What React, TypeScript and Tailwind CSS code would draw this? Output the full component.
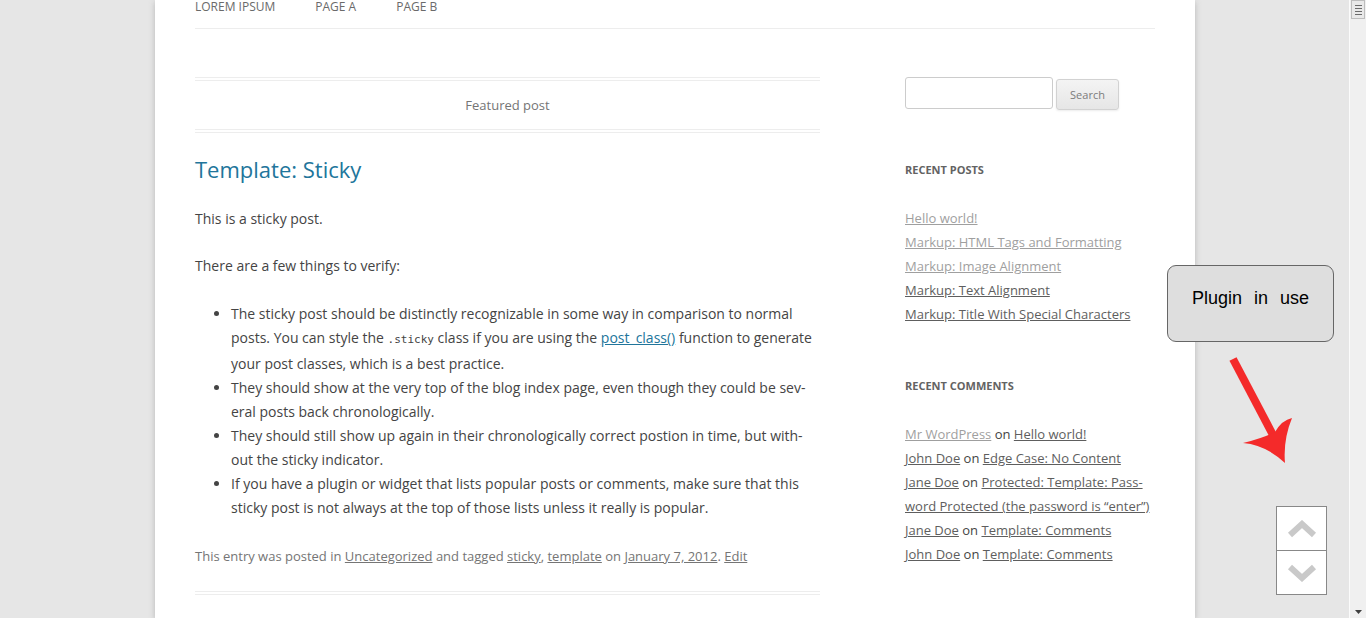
import React from "react";

const font = { fontFamily: '"Open Sans", "Liberation Sans", sans-serif' };

function Light({ children }: { children: React.ReactNode }) {
  return <a className="underline text-[#9f9f9f]">{children}</a>;
}
function Dark({ children }: { children: React.ReactNode }) {
  return <a className="underline text-[#5e5e5e]">{children}</a>;
}

export default function App() {
  return (
    <div
      className="relative w-[1366px] h-[618px] overflow-hidden bg-[#e6e6e6] flex"
      style={font}
    >
      <div className="w-[155px] shrink-0" />
      <div className="w-[1040px] shrink-0 bg-white shadow-[0_2px_6px_rgba(100,100,100,0.35)] px-[40px]">
        {/* nav */}
        <div className="h-[29px] border-b border-[#ededed] flex gap-[40px] text-[12px] leading-[14px] text-[#6a6a6a] uppercase">
          <span>Lorem Ipsum</span>
          <span>Page A</span>
          <span>Page B</span>
        </div>

        <div className="flex pt-[48px]">
          {/* main */}
          <div className="w-[625px] shrink-0 text-[#444]">
            <div className="h-[56px] border-y-4 border-double border-[#ededed] flex items-center justify-center pt-[2px] text-[13px] text-[#757575]">
              Featured post
            </div>
            <h1 className="mt-[23px] text-[22px] leading-[26px] text-[#21759b] font-normal">
              Template: Sticky
            </h1>
            <p className="mt-[25px] text-[14px] leading-[24px]">This is a sticky post.</p>
            <p className="mt-[23px] text-[14px] leading-[24px]">There are a few things to verify:</p>
            <ul className="mt-[24px] list-disc pl-[36px] text-[14px] leading-[24px]">
              <li>
                The sticky post should be distinctly recognizable in some way in comparison to normal
                <br />
                posts. You can style the{" "}
                <code className="text-[11px]" style={{ fontFamily: '"DejaVu Sans Mono", monospace' }}>
                  .sticky
                </code>{" "}
                class if you are using the{" "}
                <a className="underline text-[#21759b]">post_class()</a> function to generate
                <br />
                your post classes, which is a best practice.
              </li>
              <li>
                They should show at the very top of the blog index page, even though they could be sev-
                <br />
                eral posts back chronologically.
              </li>
              <li>
                They should still show up again in their chronologically correct postion in time, but with-
                <br />
                out the sticky indicator.
              </li>
              <li>
                If you have a plugin or widget that lists popular posts or comments, make sure that this
                <br />
                sticky post is not always at the top of those lists unless it really is popular.
              </li>
            </ul>
            <p className="mt-[24px] text-[13px] leading-[24px] text-[#757575]">
              This entry was posted in <a className="underline">Uncategorized</a> and tagged{" "}
              <a className="underline">sticky</a>, <a className="underline">template</a> on{" "}
              <a className="underline">January 7, 2012</a>. <a className="underline">Edit</a>
            </p>
            <div className="mt-[23px] border-b-4 border-double border-[#ededed]" />
          </div>

          {/* sidebar */}
          <div className="ml-auto w-[250px] shrink-0 text-[13px] leading-[24px] text-[#444]">
            <div className="flex items-start">
              <div className="w-[148px] h-[32px] border border-[#cccccc] rounded-[3px] bg-white" />
              <div className="ml-[3px] mt-[2px] w-[63px] h-[31px] border border-[#d2d2d2] rounded-[3px] bg-gradient-to-b from-[#f4f4f4] to-[#e6e6e6] flex items-center justify-center text-[11px] text-[#7c7c7c] shadow-[0_1px_2px_rgba(64,64,64,0.1)]">
                Search
              </div>
            </div>
            <h3 className="mt-[48px] text-[11px] font-bold leading-[24px] text-[#636363] uppercase">
              Recent Posts
            </h3>
            <ul className="mt-[24px]">
              <li><Light>Hello world!</Light></li>
              <li><Light>Markup: HTML Tags and Formatting</Light></li>
              <li><Light>Markup: Image Alignment</Light></li>
              <li><Dark>Markup: Text Alignment</Dark></li>
              <li><Dark>Markup: Title With Special Characters</Dark></li>
            </ul>
            <h3 className="mt-[48px] text-[11px] font-bold leading-[24px] text-[#636363] uppercase">
              Recent Comments
            </h3>
            <ul className="mt-[24px]">
              <li><Light>Mr WordPress</Light> on <Dark>Hello world!</Dark></li>
              <li><Dark>John Doe</Dark> on <Dark>Edge Case: No Content</Dark></li>
              <li>
                <Dark>Jane Doe</Dark> on{" "}
                <Dark>
                  Protected: Template: Pass-
                  <br />
                  word Protected (the password is “enter”)
                </Dark>
              </li>
              <li><Dark>Jane Doe</Dark> on <Dark>Template: Comments</Dark></li>
              <li><Dark>John Doe</Dark> on <Dark>Template: Comments</Dark></li>
            </ul>
          </div>
        </div>
      </div>
      <div className="flex-1" />

      {/* scrollbar */}
      <div className="w-[17px] shrink-0 bg-[#f0f0f0] border-l border-[#fbfbfb] flex flex-col justify-between">
        <div className="h-[19px] mx-[1px] bg-[#e9e9e9] border border-[#bdbdbd] flex flex-col items-center justify-center gap-[2px]">
          <div className="w-[7px] h-[1px] bg-[#6b6b6b]" />
          <div className="w-[7px] h-[1px] bg-[#6b6b6b]" />
          <div className="w-[7px] h-[1px] bg-[#6b6b6b]" />
          <div className="w-[7px] h-[1px] bg-[#6b6b6b]" />
        </div>
        <div className="h-[12px] flex items-center justify-center">
          <svg width="7" height="4" viewBox="0 0 7 4">
            <path d="M0 0 L7 0 L3.5 4 Z" fill="#404040" />
          </svg>
        </div>
      </div>

      {/* plugin label */}
      <div
        className="absolute left-[1167px] top-[265px] w-[167px] h-[77px] border border-[#666] rounded-[9px] bg-[#dedede] pt-[20px] pl-[24px] text-[18px] leading-[24px] text-black [word-spacing:7px]"
        style={{ fontFamily: '"Liberation Sans", Arial, sans-serif' }}
      >
        Plugin in use
      </div>

      {/* red arrow */}
      <svg
        className="absolute left-[1220px] top-[350px]"
        width="90"
        height="120"
        viewBox="1220 350 90 120"
      >
        <line x1="1233" y1="359" x2="1274" y2="437" stroke="#f42a2a" strokeWidth="8" />
        <path
          d="M1285 463 Q1266 445 1243 443 Q1263 438 1275 432 Q1282 420 1292 418 Q1283 440 1285 463 Z"
          fill="#f42a2a"
        />
      </svg>

      {/* scroll buttons */}
      <div className="absolute left-[1276px] top-[506px] w-[51px] h-[89px] border border-[#888] bg-white flex flex-col">
        <div className="h-[44px] border-b border-[#888] flex items-center justify-center">
          <svg width="30" height="18" viewBox="0 0 30 18">
            <path d="M3 15 L15 4 L27 15" fill="none" stroke="#c9c9c9" strokeWidth="6" />
          </svg>
        </div>
        <div className="flex-1 flex items-center justify-center">
          <svg width="30" height="18" viewBox="0 0 30 18">
            <path d="M3 3 L15 14 L27 3" fill="none" stroke="#c9c9c9" strokeWidth="6" />
          </svg>
        </div>
      </div>
    </div>
  );
}
